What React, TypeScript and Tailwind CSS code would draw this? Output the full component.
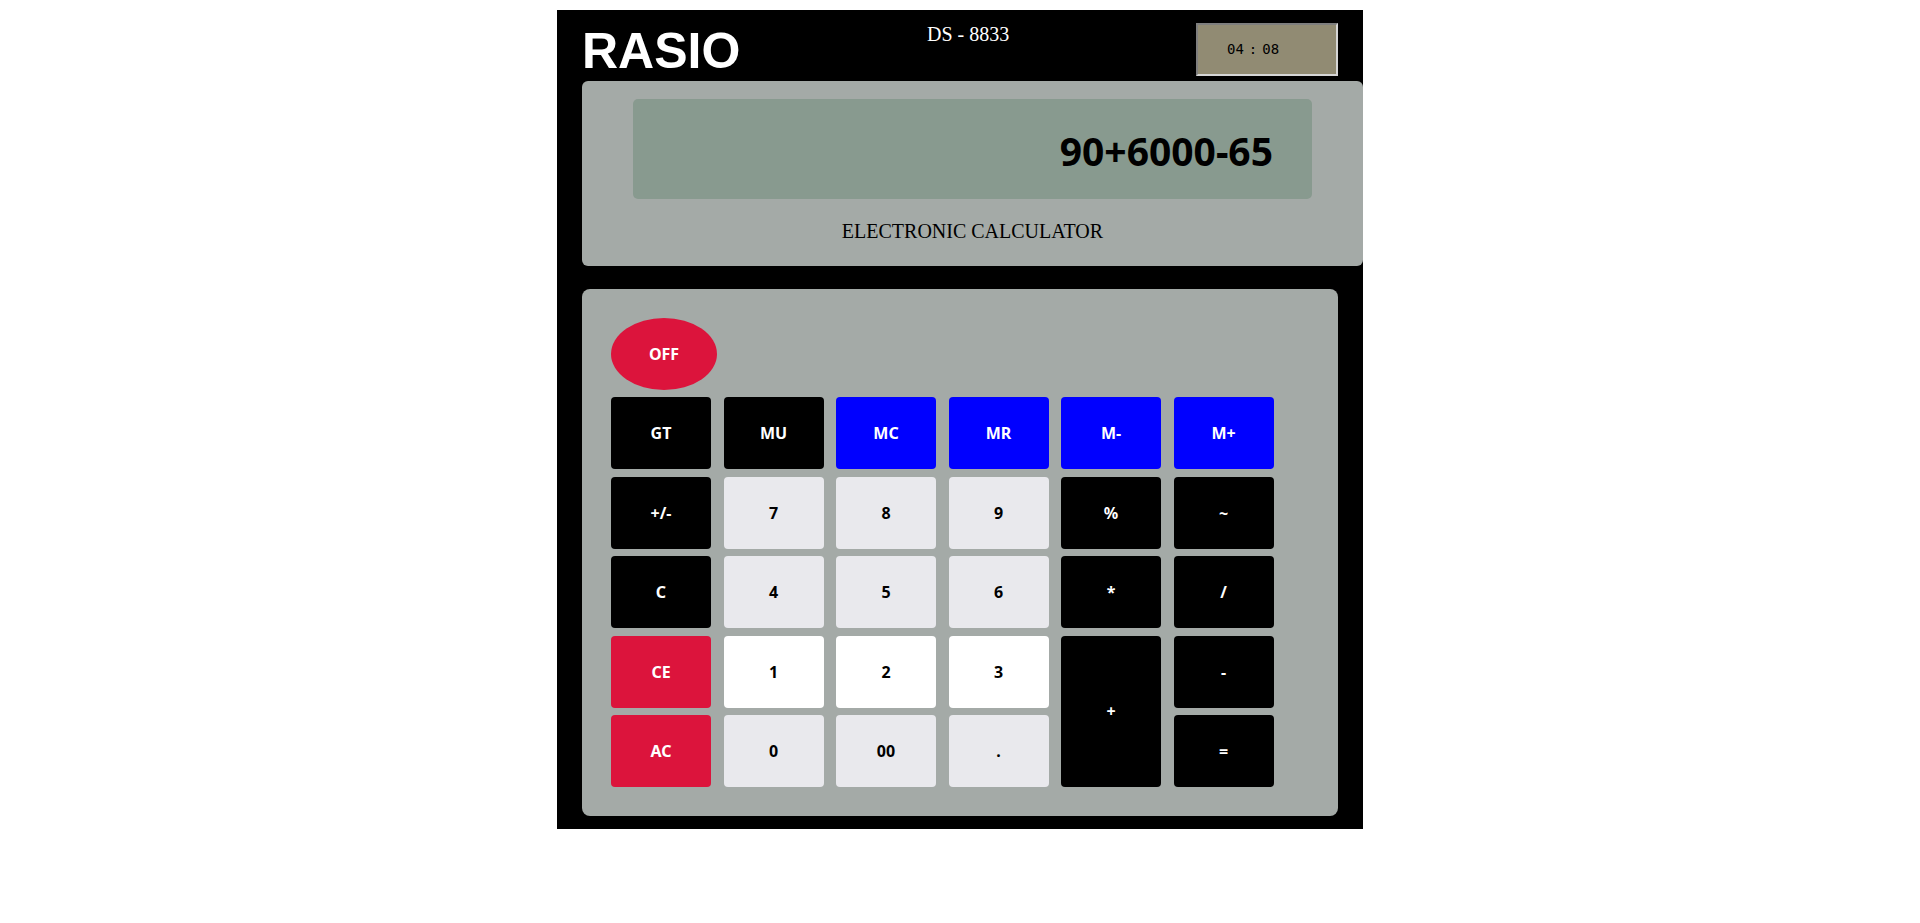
import React from 'react';

type Key = {
  label: string;
  tone: 'dark' | 'blue' | 'red' | 'light' | 'white';
  tall?: boolean;
};

const keys: Key[] = [
  { label: 'GT', tone: 'dark' },
  { label: 'MU', tone: 'dark' },
  { label: 'MC', tone: 'blue' },
  { label: 'MR', tone: 'blue' },
  { label: 'M-', tone: 'blue' },
  { label: 'M+', tone: 'blue' },
  { label: '+/-', tone: 'dark' },
  { label: '7', tone: 'light' },
  { label: '8', tone: 'light' },
  { label: '9', tone: 'light' },
  { label: '%', tone: 'dark' },
  { label: '~', tone: 'dark' },
  { label: 'C', tone: 'dark' },
  { label: '4', tone: 'light' },
  { label: '5', tone: 'light' },
  { label: '6', tone: 'light' },
  { label: '*', tone: 'dark' },
  { label: '/', tone: 'dark' },
  { label: 'CE', tone: 'red' },
  { label: '1', tone: 'white' },
  { label: '2', tone: 'white' },
  { label: '3', tone: 'white' },
  { label: '+', tone: 'dark', tall: true },
  { label: '-', tone: 'dark' },
  { label: 'AC', tone: 'red' },
  { label: '0', tone: 'light' },
  { label: '00', tone: 'light' },
  { label: '.', tone: 'light' },
  { label: '=', tone: 'dark' },
];

const toneClass: Record<Key['tone'], string> = {
  dark: 'bg-black text-white',
  blue: 'bg-[#0000ff] text-white',
  red: 'bg-[#dc143c] text-white',
  light: 'bg-[#e9e9ed] text-black',
  white: 'bg-white text-black',
};

function CalcKey({ k }: { k: Key }) {
  return (
    <button
      className={`${toneClass[k.tone]} ${k.tall ? 'row-span-2' : ''} flex items-center justify-center rounded-[4px] text-[16px] font-bold font-['Noto_Sans',sans-serif]`}
    >
      {k.label}
    </button>
  );
}

export default function App() {
  return (
    <div className="min-h-screen bg-white flex justify-center pt-[10px]">
      <div className="w-[806px] h-[819px] bg-black pl-[25px] flex flex-col">
        {/* top strip */}
        <div className="h-[71px] flex items-start pr-[25px]">
          <div className="w-[345px] mt-[16px] text-white text-[50px] leading-none font-bold font-['Liberation_Sans',Arial,sans-serif]">
            RASIO
          </div>
          <div className="mt-[14px] text-white text-[20px] leading-none font-['Liberation_Serif','Times_New_Roman',serif]">
            DS - 8833
          </div>
          <div className="ml-auto mt-[13px] w-[142px] h-[53px] bg-[#918b73] border-2 border-t-[#7e7e7e] border-l-[#7e7e7e] border-b-[#d6d6d6] border-r-[#d6d6d6] flex items-center gap-[5px] pl-[29px] text-[14px] text-black font-['DejaVu_Sans_Mono',monospace]">
            <span>04</span>
            <span>:</span>
            <span>08</span>
          </div>
        </div>

        {/* display */}
        <div className="h-[185px] bg-[#a4aaa7] rounded-[6px] pt-[18px] px-[51px] flex flex-col">
          <div className="h-[100px] bg-[#889a8f] rounded-[5px] flex items-center justify-end pr-[39px] pt-[5px] text-[39px] font-bold text-black font-['Noto_Sans',sans-serif]">
            90+6000-65
          </div>
          <div className="mt-[22px] text-center text-[20px] leading-none text-black font-['Liberation_Serif','Times_New_Roman',serif]">
            ELECTRONIC CALCULATOR
          </div>
        </div>

        {/* keypad */}
        <div className="mt-[23px] mr-[25px] h-[527px] bg-[#a4aaa7] rounded-[8px] p-[29px] flex flex-col">
          <button className="w-[106px] h-[72px] rounded-[50%] bg-[#dc143c] text-white text-[16px] font-bold font-['Noto_Sans',sans-serif]">
            OFF
          </button>
          <div className="mt-[7px] grid grid-cols-[repeat(6,100px)] auto-rows-[72px] gap-x-[12.5px] gap-y-[7.5px]">
            {keys.map((k) => (
              <CalcKey key={k.label} k={k} />
            ))}
          </div>
        </div>
      </div>
    </div>
  );
}
